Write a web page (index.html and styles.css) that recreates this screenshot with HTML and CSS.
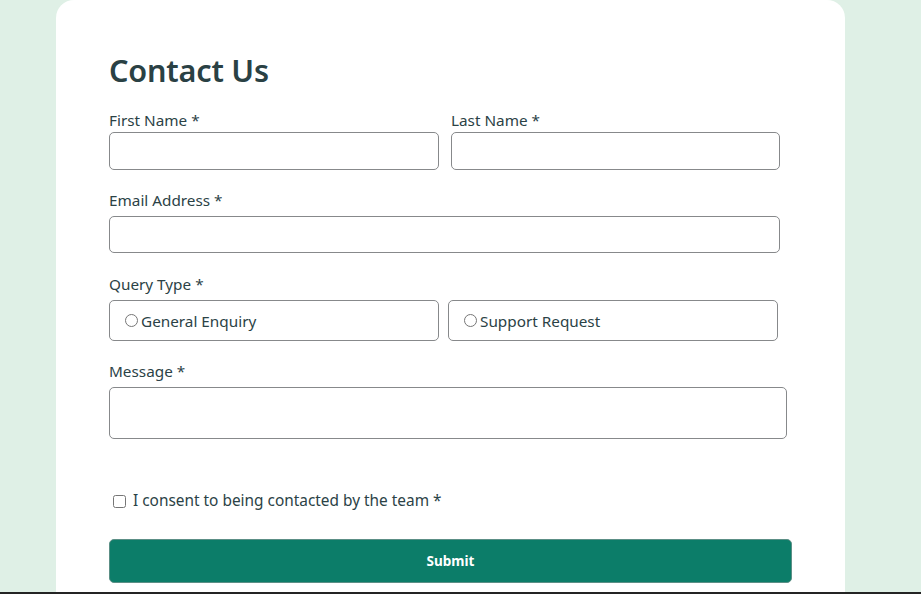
FILE: index.html
```html
<!DOCTYPE html>
<html lang="en">
<head>
<meta charset="utf-8">
<title>Contact Us</title>
<link rel="stylesheet" href="styles.css">
</head>
<body>
<div class="page">
  <main class="card">
    <h1 class="title">Contact Us</h1>
    <form class="form">
      <div class="names">
        <div class="field">
          <label class="label label-first">First Name *</label>
          <input class="input input-name" type="text">
        </div>
        <div class="field">
          <label class="label label-first">Last Name *</label>
          <input class="input input-name" type="text">
        </div>
      </div>
      <label class="label">Email Address *</label>
      <input class="input input-email" type="email">
      <label class="label">Query Type *</label>
      <div class="radios">
        <label class="radio-box"><input class="radio" type="radio" name="q"><span>General Enquiry</span></label>
        <label class="radio-box"><input class="radio" type="radio" name="q"><span>Support Request</span></label>
      </div>
      <label class="label">Message *</label>
      <textarea class="input message"></textarea>
      <label class="consent"><input class="check" type="checkbox"><span>I consent to being contacted by the team *</span></label>
      <button class="submit" type="button">Submit</button>
    </form>
  </main>
</div>
<div class="bottom-line"></div>
</body>
</html>
```

FILE: styles.css
```css
* { box-sizing: border-box; }
html, body { margin: 0; padding: 0; }
body {
  background: #dff0e6;
  font-family: "Noto Sans", "Open Sans", sans-serif;
  color: #2b4246;
  height: 594px;
  overflow: hidden;
}
.page {
  height: 592px;
  padding-left: 56px;
  overflow: hidden;
}
.bottom-line {
  height: 2px;
  background: #242424;
}
.card {
  width: 789px;
  height: 100%;
  background: #fff;
  border-radius: 18px 18px 0 0;
  padding: 50px 0 0 53px;
}
.title {
  margin: 0 0 20px;
  font-size: 30.6px;
  line-height: 40px;
  font-weight: 600;
  color: #2a4144;
  letter-spacing: -0.2px;
}
.form { display: flex; flex-direction: column; align-items: flex-start; }
.names { display: flex; gap: 12px; }
.field { display: flex; flex-direction: column; }
.label {
  display: block;
  font-size: 15.3px;
  line-height: 20px;
  color: #2b4246;
  margin-bottom: 6px;
}
.label-first { margin-bottom: 2px; }
.input {
  border: 1px solid #87898b;
  border-radius: 5px;
  background: #fff;
  font: inherit;
  margin: 0;
}
.input-name { width: 330px; height: 38px; }
.names .field:last-child .input-name { width: 329px; }
.input-email { width: 671px; height: 37px; margin-top: 0; }
.names + .label { margin-top: 20px; }
.input-email + .label { margin-top: 21px; }
.radios { display: flex; gap: 9px; }
.radio-box {
  width: 330px;
  height: 41px;
  border: 1px solid #87898b;
  border-radius: 5px;
  display: flex;
  align-items: center;
  padding-left: 15px;
  font-size: 15.3px;
  color: #2b4246;
}
.radio {
  width: 13px;
  height: 13px;
  margin: 0 3px 0 0;
}
.radios + .label { margin-top: 20px; }
.message { width: 678px; height: 52px; resize: none; }
.consent {
  display: flex;
  align-items: center;
  margin-top: 52px;
  margin-left: 4px;
  font-size: 15.4px;
  line-height: 20px;
  color: #2b4246;
}
.check {
  width: 13px;
  height: 13px;
  margin: 0 7px 0 0;
}
.submit {
  margin-top: 28px;
  width: 683px;
  height: 44px;
  background: #0c7d69;
  color: #fff;
  border: 1px solid #5c8f86;
  border-radius: 5px;
  font-family: "Noto Sans", sans-serif;
  font-weight: 700;
  font-size: 13.5px;
}
```
